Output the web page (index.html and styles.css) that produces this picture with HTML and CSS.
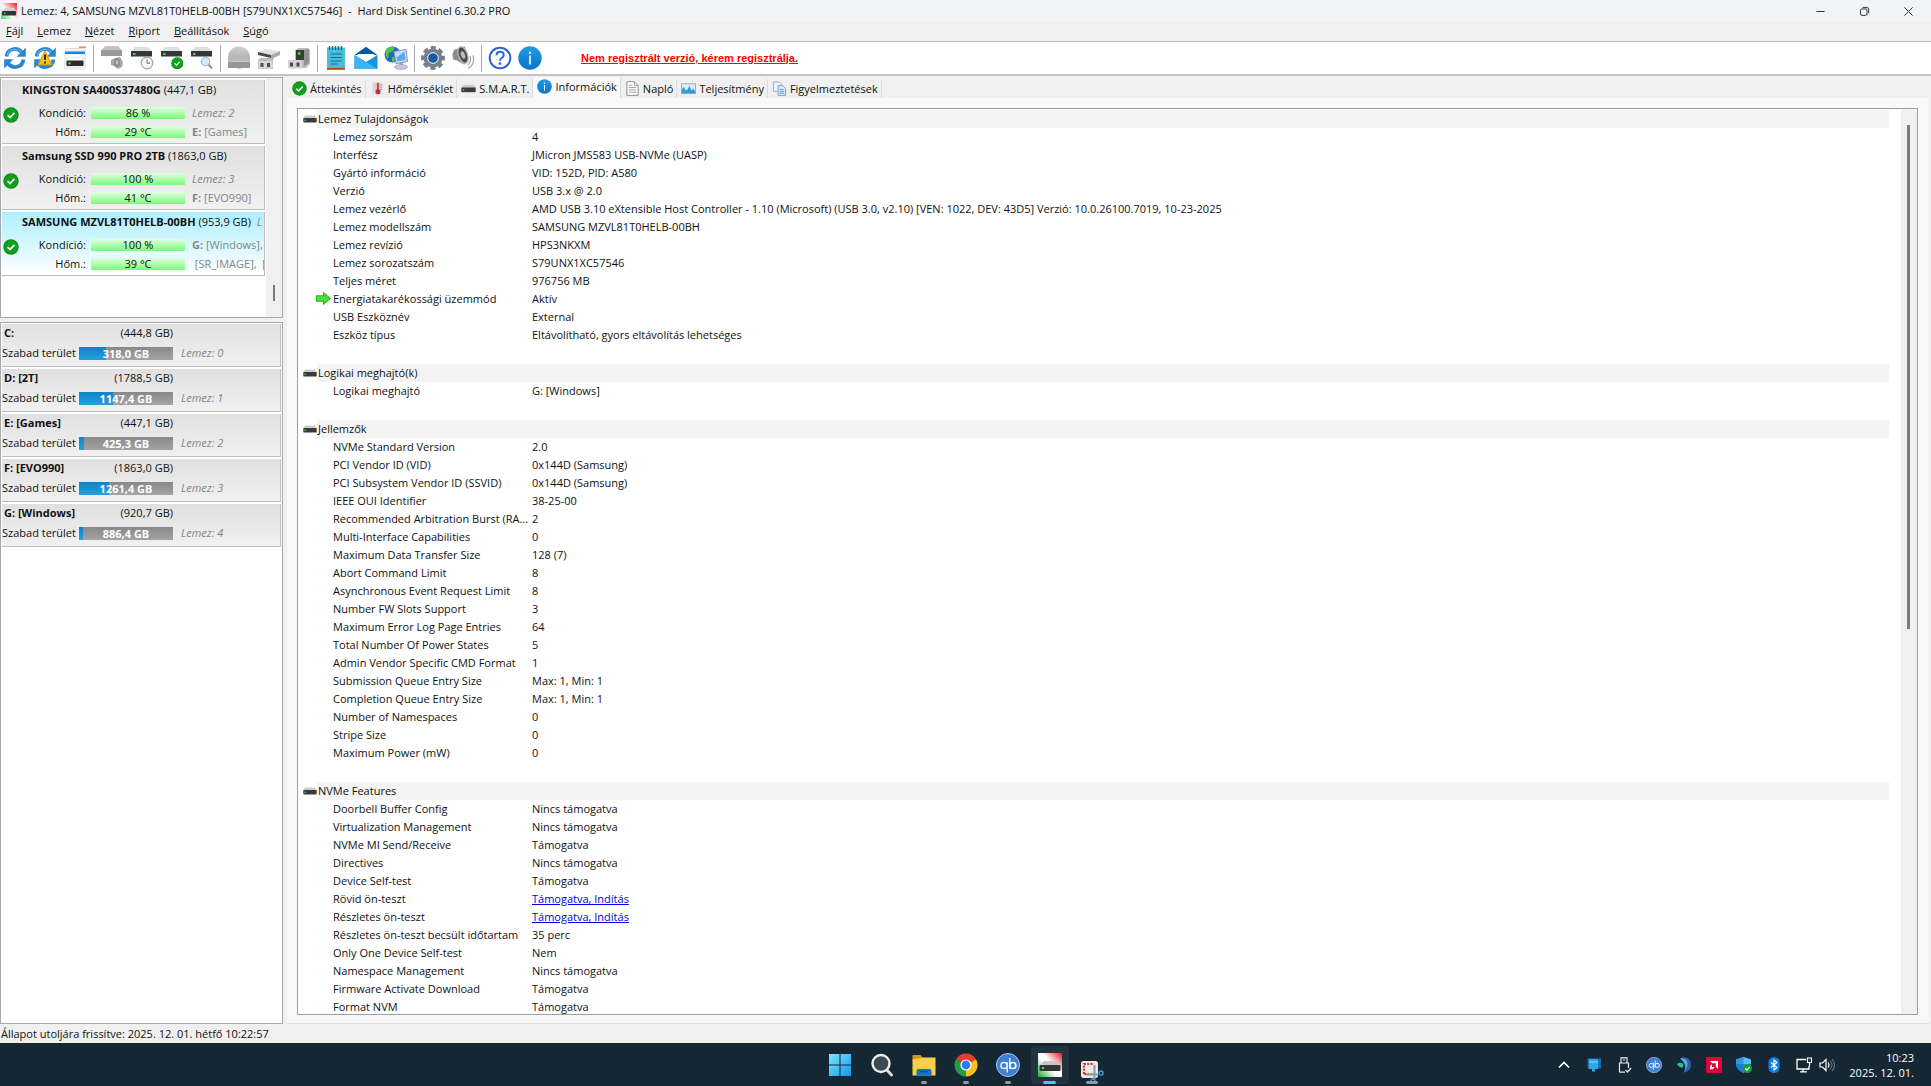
FILE: index.html
```
<!DOCTYPE html>
<html lang="hu">
<head>
    <meta charset="UTF-8">
    <meta name="viewport" content="width=device-width, initial-scale=1.0">
    <title>Hard Disk Sentinel 6.30.2 PRO</title>
    <link rel="stylesheet" href="styles.css">
</head>
<body>
    <!-- shared icons -->
    <svg class="defs" width="0" height="0" aria-hidden="true">
        <defs>
            <linearGradient id="g-blue" x1="0" y1="0" x2="0" y2="1"><stop offset="0" stop-color="#1f9be6"/><stop offset="1" stop-color="#0a74cc"/></linearGradient>
            <linearGradient id="g-grey" x1="0" y1="0" x2="0" y2="1"><stop offset="0" stop-color="#cfcfcf"/><stop offset="1" stop-color="#9c9c9c"/></linearGradient>
            <linearGradient id="g-win" x1="0" y1="0" x2="1" y2="1"><stop offset="0" stop-color="#7be8fb"/><stop offset="1" stop-color="#1694ee"/></linearGradient>
            <linearGradient id="g-red" x1="0" y1="1" x2="1" y2="0"><stop offset="0" stop-color="#0fae2c"/><stop offset=".42" stop-color="#fff"/><stop offset=".58" stop-color="#fff"/><stop offset="1" stop-color="#f01414"/></linearGradient>
            <linearGradient id="g-logo" x1="0" y1="1" x2="1" y2="0"><stop offset="0" stop-color="#3cdf64"/><stop offset=".45" stop-color="#fff"/><stop offset="1" stop-color="#f01e1e"/></linearGradient>
        </defs>
        <symbol id="i-ok" viewBox="0 0 16 16">
            <circle cx="8" cy="8" r="7.7" fill="#0b8a14"/><circle cx="8" cy="8" r="6.8" fill="#12a01c"/>
            <path d="M4.6 8.2 7 10.5l4.4-4.6" fill="none" stroke="#fff" stroke-width="1.6"/>
        </symbol>
        <symbol id="i-disk" viewBox="0 0 14 8">
            <path d="M2 .5h10l1.700 3H.3z" fill="#c9cdd0"/><rect x=".3" y="3" width="13.400" height="4.400" rx=".6" fill="#3b3b3b"/><rect x="1.600" y="4.600" width="1.400" height="1.400" fill="#39d353"/>
        </symbol>
        <symbol id="i-drive" viewBox="0 0 24 24">
            <path d="M5 1h13l4 4.500H1z" fill="#dcdfe0"/><rect x="1" y="5" width="21" height="5.500" fill="#363636"/><rect x="3" y="7" width="2.500" height="2" fill="#46dd46"/>
        </symbol>
        <symbol id="i-info" viewBox="0 0 24 24">
            <circle cx="12" cy="12" r="11.700" fill="url(#g-blue)"/><circle cx="12" cy="6.700" r="1.200" fill="#fff"/><path d="M12 9.500v9" stroke="#fff" stroke-width="1.600"/>
        </symbol>
        <symbol id="i-refresh" viewBox="0 0 24 24">
            <path d="M3.500 10.500C4.500 2.500 14 .5 19 6.500M20.500 13.500C19.500 21.500 10 23.500 5 17.500" fill="none" stroke="#2b86d2" stroke-width="3.800"/>
            <path d="M22.800 1.500v9.300h-9.300zM1.200 22.500v-9.300h9.300z" fill="#2b86d2"/>
            <path d="M4 9.500C6 3 13.500 1.500 18.500 6" fill="none" stroke="#5db1ee" stroke-width="1.200"/>
        </symbol>
        <symbol id="i-qb" viewBox="0 0 24 24">
            <circle cx="12" cy="12" r="11.500" fill="#3f7fd0" stroke="#a9c8f2" stroke-width="1"/>
            <circle cx="8" cy="12.500" r="3.100" fill="none" stroke="#dcebff" stroke-width="1.500"/><path d="M11.200 9v10.500M13.800 5v11" stroke="#dcebff" stroke-width="1.500"/><circle cx="16.800" cy="12.500" r="3.100" fill="none" stroke="#fff" stroke-width="1.500"/>
        </symbol>
        <symbol id="i-logo" viewBox="0 0 24 24">
            <rect width="24" height="24" fill="url(#g-red)"/><path d="M6 8h12l4.500 4.500h-21z" fill="#c6c9ca"/><rect x="1.500" y="12" width="21" height="6" rx="1" fill="#353535"/><rect x="4" y="14" width="2" height="2" fill="#40df40"/>
        </symbol>
    </svg>

    <div class="window">
        <header class="titlebar">
            <svg class="title-icon" viewBox="0 0 16 16"><rect width="16" height="16" fill="url(#g-logo)"/><path d="M4 5h9l2 3.500H1.500z" fill="#d0d3d4"/><rect x="1" y="8" width="14" height="4.500" rx="1" fill="#333"/><rect x="3" y="9.500" width="1.500" height="1.500" fill="#40df40"/></svg>
            <h1>Lemez: 4, SAMSUNG MZVL81T0HELB-00BH [S79UNX1XC57546] &nbsp;-&nbsp; Hard Disk Sentinel 6.30.2 PRO</h1>
            <div class="window-buttons">
                <button type="button" aria-label="Kis méret"><svg viewBox="0 0 12 12"><path d="M1.500 6h9"/></svg></button>
                <button type="button" aria-label="Előző méret"><svg viewBox="0 0 12 12"><rect x="1.700" y="3.200" width="7" height="7" rx="1.500"/><path d="M4 1.500h4.500a2 2 0 0 1 2 2V8"/></svg></button>
                <button type="button" aria-label="Bezárás"><svg viewBox="0 0 12 12"><path d="M1.500 1.500l9 9M10.500 1.500l-9 9"/></svg></button>
            </div>
        </header>

        <nav class="menubar">
            <button type="button"><u>F</u>ájl</button>
            <button type="button"><u>L</u>emez</button>
            <button type="button"><u>N</u>ézet</button>
            <button type="button"><u>R</u>iport</button>
            <button type="button"><u>B</u>eállítások</button>
            <button type="button"><u>S</u>úgó</button>
        </nav>

        <div class="toolbar">
            <button type="button" aria-label="Frissítés"><svg viewBox="0 0 24 24"><use href="#i-refresh"/></svg></button>
            <button type="button" aria-label="Frissítés figyelmeztetéssel"><svg viewBox="0 0 24 24"><use href="#i-refresh"/><path d="M12 5.500 18.500 18.500h-13z" fill="#ffc61a" stroke="#eba400" stroke-width="1.500" stroke-linejoin="round"/><path d="M12 8.500v5.500M12 15.500v2" stroke="#222" stroke-width="1.800"/></svg></button>
            <button type="button" aria-label="Nézet"><svg viewBox="0 0 24 24"><rect x="1" y="3.500" width="22" height="20" fill="#ececec"/><path d="M16 1.200h7" stroke="#e08080" stroke-width="1.500"/><path d="M2 2.500h20" stroke="#ddd"/><rect x="2" y="5.500" width="20" height="2.800" fill="#1c86dc"/><rect x="2" y="8.300" width="20" height="2.500" fill="#fff"/><path d="M6 12h12l2.500 3h-17z" fill="#fff"/><rect x="3.500" y="14.500" width="17" height="5.500" rx="1" fill="#2c2c2c"/><rect x="5.500" y="16.300" width="2" height="2" fill="#4be04b"/></svg></button>
            <span class="sep"></span>
            <button type="button" aria-label="Hang"><svg viewBox="0 0 24 24"><path d="M5 0h13l4 4.500H1z" fill="#c4c4c4"/><rect x="1" y="4" width="21" height="6" fill="#9a9a9a"/><path d="M11 14l4-2 5-1 3 5-1 5-4 2-4-3-3-1z" fill="#a8a8a8"/><ellipse cx="17" cy="16.500" rx="3" ry="4.500" fill="#8d8d8d"/><ellipse cx="17" cy="16.500" rx="1.300" ry="2.200" fill="#c4c4c4"/></svg></button>
            <button type="button" aria-label="Ütemezés"><svg viewBox="0 0 24 24"><use href="#i-drive"/><circle cx="17" cy="17" r="5.800" fill="#f7f7f7" stroke="#a2a2a2" stroke-width="1.200"/><path d="M17 13.500v3.700h3" fill="none" stroke="#666"/></svg></button>
            <button type="button" aria-label="Teszt"><svg viewBox="0 0 24 24"><use href="#i-drive"/><use href="#i-ok" x="11" y="11" width="12.500" height="12.500"/></svg></button>
            <button type="button" aria-label="Keresés"><svg viewBox="0 0 24 24"><use href="#i-drive"/><path d="M18.500 18.500l3.500 4" stroke="#a88b7b" stroke-width="2"/><circle cx="15.500" cy="15.500" r="4.300" fill="#cfe9fb" stroke="#8eb2cd"/></svg></button>
            <span class="sep"></span>
            <button type="button" aria-label="Lemez művelet"><svg viewBox="0 0 24 24"><circle cx="12" cy="11.500" r="11" fill="url(#g-grey)"/><path d="M4.500 11h15l3 4.500h-21z" fill="#b9b9b9"/><rect x="1" y="15" width="22" height="7" rx="1" fill="#969696"/><path d="M2 15.500h20" stroke="#c8c8c8"/></svg></button>
            <button type="button" aria-label="Csatlakozó"><svg viewBox="0 0 24 24"><path d="M1 6l8-3 14 2-9 4z" fill="#e2e2e2"/><path d="M1 6l13 3v3L1 9z" fill="#4a4a4a"/><path d="M14 9l9-4v4l-9 4z" fill="#a9a9a9"/><path d="M1 14l3-2h13l-1 3v8H1z" fill="#bcbcbc"/><rect x="1.500" y="15" width="14" height="7.500" rx="1" fill="#d8d8d8"/><rect x="3.500" y="17" width="3" height="4" fill="#4b4b4b"/><rect x="10" y="17" width="3" height="4" fill="#4b4b4b"/></svg></button>
            <button type="button" aria-label="Eltávolítás"><svg viewBox="0 0 24 24"><path d="M8 4l4-2h9l2 2v14l-4 4H8z" fill="#bbb"/><rect x="9" y="4" width="8" height="10" fill="#3a3a3a"/><rect x="11" y="6" width="2.500" height="3" fill="#35d135"/><path d="M17 4l5-1v14l-5 3z" fill="#929292"/><rect x="1" y="14" width="14" height="8.500" rx="1" fill="#d2d2d2"/><rect x="3" y="16.500" width="3" height="4" fill="#4b4b4b"/><rect x="9.500" y="16.500" width="3" height="4" fill="#4b4b4b"/></svg></button>
            <span class="sep"></span>
            <button type="button" aria-label="Jegyzet"><svg viewBox="0 0 24 24"><rect x="3" y="1.500" width="18" height="20" fill="#45bedb"/><path d="M6.500 8h11.500M6.500 11.500h11.500M6.500 15h11.500M6.500 18h7" stroke="#14708f" stroke-width="1.200"/><path d="M5.500 0v4M8.500 0v4M11.500 0v4M14.500 0v4M17.500 0v4" stroke="#176a8a" stroke-width="1.300"/><rect x="3" y="21.500" width="18" height="2.300" fill="#b04a18"/></svg></button>
            <button type="button" aria-label="Levél"><svg viewBox="0 0 24 24"><path d="M.5 9 12 .8 23.500 9z" fill="#0a58a4"/><path d="M3.500 8h17L12 17z" fill="#fff"/><path d="M.5 9 12 16 23.500 9v14H.5z" fill="#1c93e0"/><path d="M.5 9 12 16 23.500 23H.5z" fill="#3bb6f0"/></svg></button>
            <button type="button" aria-label="Hálózat"><svg viewBox="0 0 24 24"><circle cx="8.500" cy="8.500" r="8" fill="#2464c4"/><path d="M2 4q5-5 9-3l-2 4-4 2-1 6q-4-4-2-9zM8 11l4 1-2 4q-3 0-2-5z" fill="#4fc743"/><path d="M10 5.500 22 3.500l1.500 12L12 17.500z" fill="#e1e3f3" stroke="#8289b5"/><path d="M11.800 7l8.700-1.500 1.200 8.500-8.700 1.500z" fill="#59a9f3"/><path d="M11.800 7l8.700-1.500-8 6z" fill="#bfe0ff"/><path d="M15 17l3.500-.5 1 3.500H16z" fill="#9ba2c5"/><ellipse cx="17" cy="21" rx="6.500" ry="2.400" fill="#c3c7e0" stroke="#9298bd" stroke-width=".6"/></svg></button>
            <span class="sep"></span>
            <button type="button" aria-label="Beállítások"><svg viewBox="0 0 24 24"><circle cx="12" cy="12" r="7.500" fill="none" stroke="#75808a" stroke-width="4"/><circle cx="12" cy="12" r="10.200" fill="none" stroke="#75808a" stroke-width="3.400" stroke-dasharray="5 3.010" stroke-dashoffset="2.500"/><circle cx="12" cy="12" r="5.300" fill="#1a5ca3" stroke="#e3ebf2"/></svg></button>
            <button type="button" aria-label="Hangok"><svg viewBox="0 0 24 24"><path d="M1.500 8 3 4l8-3 3-.5 3 15-4 3-7-4-4-1z" fill="#8c8c8c"/><ellipse cx="12" cy="9" rx="4.500" ry="8.500" transform="rotate(-20 12 9)" fill="#4b4b4b" stroke="#b9b9b9" stroke-width="1.200"/><ellipse cx="12" cy="9" rx="2" ry="4" transform="rotate(-20 12 9)" fill="#bdbdbd"/><path d="M17 19q4-4 2-9M17.500 22.500q7-5 4.500-13" fill="none" stroke="#aaa4c0" stroke-width="1.300"/></svg></button>
            <span class="sep"></span>
            <button type="button" aria-label="Segítség"><svg viewBox="0 0 24 24"><circle cx="12" cy="12" r="10.300" fill="#fff" stroke="#2a67d0" stroke-width="2"/><path d="M8.500 9.300q0-3.500 3.600-3.500T15.700 9q0 1.800-2 3-1.700 1-1.700 2.700" fill="none" stroke="#2a67d0" stroke-width="2"/><circle cx="12" cy="17.600" r="1.400" fill="#2a67d0"/></svg></button>
            <button type="button" aria-label="Névjegy"><svg viewBox="0 0 24 24"><use href="#i-info"/></svg></button>
            <a class="register" href="#">Nem regisztrált verzió, kérem regisztrálja.</a>
        </div>

        <div class="workspace">
            <aside class="sidebar">
                <section class="disk-box">
                    <div class="disk-list">
                        <article class="disk">
                            <svg class="ok" viewBox="0 0 16 16"><use href="#i-ok"/></svg>
                            <h2><b>KINGSTON SA400S37480G</b> (447,1 GB)</h2>
                            <span class="key">Kondíció:</span><span class="good">86 %</span><span class="note"><i>Lemez: 2</i></span>
                            <span class="key">Hőm.:</span><span class="good">29 °C</span><span class="note"><b>E:</b> [Games]</span>
                        </article>
                        <article class="disk">
                            <svg class="ok" viewBox="0 0 16 16"><use href="#i-ok"/></svg>
                            <h2><b>Samsung SSD 990 PRO 2TB</b> (1863,0 GB)</h2>
                            <span class="key">Kondíció:</span><span class="good">100 %</span><span class="note"><i>Lemez: 3</i></span>
                            <span class="key">Hőm.:</span><span class="good">41 °C</span><span class="note"><b>F:</b> [EVO990]</span>
                        </article>
                        <article class="disk selected">
                            <svg class="ok" viewBox="0 0 16 16"><use href="#i-ok"/></svg>
                            <h2><b>SAMSUNG MZVL81T0HELB-00BH</b> (953,9 GB) &nbsp;<i>L</i></h2>
                            <span class="key">Kondíció:</span><span class="good">100 %</span><span class="note"><b>G:</b> [Windows],</span>
                            <span class="key">Hőm.:</span><span class="good">39 °C</span><span class="note">&nbsp;[SR_IMAGE], &nbsp;[</span>
                        </article>
                    </div>
                    <div class="scroll"><span class="thumb-small"></span></div>
                </section>

                <section class="volume-box">
                    <article class="volume">
                        <div class="volume-head"><b>C:</b><span>(444,8 GB)</span></div>
                        <div class="volume-row"><span>Szabad terület</span><span class="usage"><span class="fill" style="width: 29%"></span><b>318,0 GB</b></span><i>Lemez: 0</i></div>
                    </article>
                    <article class="volume">
                        <div class="volume-head"><b>D: [2T]</b><span>(1788,5 GB)</span></div>
                        <div class="volume-row"><span>Szabad terület</span><span class="usage"><span class="fill" style="width: 36%"></span><b>1147,4 GB</b></span><i>Lemez: 1</i></div>
                    </article>
                    <article class="volume">
                        <div class="volume-head"><b>E: [Games]</b><span>(447,1 GB)</span></div>
                        <div class="volume-row"><span>Szabad terület</span><span class="usage"><span class="fill" style="width: 5%"></span><b>425,3 GB</b></span><i>Lemez: 2</i></div>
                    </article>
                    <article class="volume">
                        <div class="volume-head"><b>F: [EVO990]</b><span>(1863,0 GB)</span></div>
                        <div class="volume-row"><span>Szabad terület</span><span class="usage"><span class="fill" style="width: 32%"></span><b>1261,4 GB</b></span><i>Lemez: 3</i></div>
                    </article>
                    <article class="volume">
                        <div class="volume-head"><b>G: [Windows]</b><span>(920,7 GB)</span></div>
                        <div class="volume-row"><span>Szabad terület</span><span class="usage"><span class="fill" style="width: 4%"></span><b>886,4 GB</b></span><i>Lemez: 4</i></div>
                    </article>
                </section>
            </aside>

            <main class="content">
                <div class="tabs" role="tablist">
                    <button type="button" role="tab" class="tab"><svg viewBox="0 0 16 16"><use href="#i-ok"/></svg>Áttekintés</button>
                    <button type="button" role="tab" class="tab"><svg viewBox="0 0 16 16"><path d="M2 1h9l3 2v12H2z" fill="#e1e6ec"/><path d="M4 3v9M6 2v9" stroke="#c3cbd4"/><path d="M8.500 2v8" stroke="#d9453c" stroke-width="2.600"/><circle cx="8.500" cy="11.500" r="2.700" fill="#c92a22"/><path d="M11 4h2M11 6.500h2M11 9h2" stroke="#7c8fa5"/></svg>Hőmérséklet</button>
                    <button type="button" role="tab" class="tab"><svg viewBox="0 0 14 8"><use href="#i-disk"/></svg>S.M.A.R.T.</button>
                    <button type="button" role="tab" class="tab active" aria-selected="true"><svg viewBox="0 0 24 24"><use href="#i-info"/></svg>Információk</button>
                    <button type="button" role="tab" class="tab"><svg viewBox="0 0 16 16"><path d="M2 .7h8l4 4v10.600H2z" fill="#fff" stroke="#888"/><path d="M10 .7v4h4M4 4.500h4M4 7h8M4 9.500h8M4 12h8" fill="none" stroke="#999"/></svg>Napló</button>
                    <button type="button" role="tab" class="tab"><svg viewBox="0 0 16 16"><rect x=".5" y="3" width="15" height="10.500" fill="#d9efff" stroke="#9ab"/><path d="M1 13V9l2-3 2 4 2-1 2-4 2 5 2-2 2 3v2z" fill="#3a96dc"/></svg>Teljesítmény</button>
                    <button type="button" role="tab" class="tab"><svg viewBox="0 0 16 16"><path d="M1.500 1h6l2.500 2.500V11H1.500z" fill="#e8f3fd" stroke="#9aaec0"/><path d="M6.500 5h5l3 3v7.300h-8z" fill="#d9ecfb" stroke="#7d9ab8"/><path d="M8 9h4M8 11h5M8 13h5" stroke="#5b9bd5"/></svg>Figyelmeztetések</button>
                </div>
                <div class="panel">
                    <div class="list">
                        <table class="props">
                            <tbody>
                                <tr class="group"><th colspan="2"><svg viewBox="0 0 14 8"><use href="#i-disk"/></svg><span>Lemez Tulajdonságok</span></th></tr>
                                <tr><th>Lemez sorszám</th><td>4</td></tr>
                                <tr><th>Interfész</th><td>JMicron JMS583 USB-NVMe (UASP)</td></tr>
                                <tr><th>Gyártó információ</th><td>VID: 152D, PID: A580</td></tr>
                                <tr><th>Verzió</th><td>USB 3.x @ 2.0</td></tr>
                                <tr><th>Lemez vezérlő</th><td>AMD USB 3.10 eXtensible Host Controller - 1.10 (Microsoft) (USB 3.0, v2.10) [VEN: 1022, DEV: 43D5] Verzió: 10.0.26100.7019, 10-23-2025</td></tr>
                                <tr><th>Lemez modellszám</th><td>SAMSUNG MZVL81T0HELB-00BH</td></tr>
                                <tr><th>Lemez revízió</th><td>HPS3NKXM</td></tr>
                                <tr><th>Lemez sorozatszám</th><td>S79UNX1XC57546</td></tr>
                                <tr><th>Teljes méret</th><td>976756 MB</td></tr>
                                <tr class="marked"><th><svg viewBox="0 0 14 12"><path d="M.5 3.500h6.500V.7L13.500 6 7 11.300V8.500H.5z" fill="#4ddc3c" stroke="#30b528"/></svg>Energiatakarékossági üzemmód</th><td>Aktív</td></tr>
                                <tr><th>USB Eszköznév</th><td>External</td></tr>
                                <tr><th>Eszköz típus</th><td>Eltávolítható, gyors eltávolítás lehetséges</td></tr>
                            </tbody>
                            <tbody>
                                <tr class="group"><th colspan="2"><svg viewBox="0 0 14 8"><use href="#i-disk"/></svg><span>Logikai meghajtó(k)</span></th></tr>
                                <tr><th>Logikai meghajtó</th><td>G: [Windows]</td></tr>
                            </tbody>
                            <tbody>
                                <tr class="group"><th colspan="2"><svg viewBox="0 0 14 8"><use href="#i-disk"/></svg><span>Jellemzők</span></th></tr>
                                <tr><th>NVMe Standard Version</th><td>2.0</td></tr>
                                <tr><th>PCI Vendor ID (VID)</th><td>0x144D (Samsung)</td></tr>
                                <tr><th>PCI Subsystem Vendor ID (SSVID)</th><td>0x144D (Samsung)</td></tr>
                                <tr><th>IEEE OUI Identifier</th><td>38-25-00</td></tr>
                                <tr><th>Recommended Arbitration Burst (RA...</th><td>2</td></tr>
                                <tr><th>Multi-Interface Capabilities</th><td>0</td></tr>
                                <tr><th>Maximum Data Transfer Size</th><td>128 (7)</td></tr>
                                <tr><th>Abort Command Limit</th><td>8</td></tr>
                                <tr><th>Asynchronous Event Request Limit</th><td>8</td></tr>
                                <tr><th>Number FW Slots Support</th><td>3</td></tr>
                                <tr><th>Maximum Error Log Page Entries</th><td>64</td></tr>
                                <tr><th>Total Number Of Power States</th><td>5</td></tr>
                                <tr><th>Admin Vendor Specific CMD Format</th><td>1</td></tr>
                                <tr><th>Submission Queue Entry Size</th><td>Max: 1, Min: 1</td></tr>
                                <tr><th>Completion Queue Entry Size</th><td>Max: 1, Min: 1</td></tr>
                                <tr><th>Number of Namespaces</th><td>0</td></tr>
                                <tr><th>Stripe Size</th><td>0</td></tr>
                                <tr><th>Maximum Power (mW)</th><td>0</td></tr>
                            </tbody>
                            <tbody>
                                <tr class="group"><th colspan="2"><svg viewBox="0 0 14 8"><use href="#i-disk"/></svg><span>NVMe Features</span></th></tr>
                                <tr><th>Doorbell Buffer Config</th><td>Nincs támogatva</td></tr>
                                <tr><th>Virtualization Management</th><td>Nincs támogatva</td></tr>
                                <tr><th>NVMe MI Send/Receive</th><td>Támogatva</td></tr>
                                <tr><th>Directives</th><td>Nincs támogatva</td></tr>
                                <tr><th>Device Self-test</th><td>Támogatva</td></tr>
                                <tr><th>Rövid ön-teszt</th><td><a href="#">Támogatva, Indítás</a></td></tr>
                                <tr><th>Részletes ön-teszt</th><td><a href="#">Támogatva, Indítás</a></td></tr>
                                <tr><th>Részletes ön-teszt becsült időtartam</th><td>35 perc</td></tr>
                                <tr><th>Only One Device Self-test</th><td>Nem</td></tr>
                                <tr><th>Namespace Management</th><td>Nincs támogatva</td></tr>
                                <tr><th>Firmware Activate Download</th><td>Támogatva</td></tr>
                                <tr><th>Format NVM</th><td>Támogatva</td></tr>
                            </tbody>
                        </table>
                        <div class="scroll"><span class="thumb"></span></div>
                    </div>
                </div>
            </main>
        </div>

        <footer class="statusbar">Állapot utoljára frissítve: 2025. 12. 01. hétfő 10:22:57</footer>
    </div>

    <div class="taskbar">
        <div class="apps">
            <button type="button" class="app" aria-label="Start"><svg viewBox="0 0 24 24"><path d="M1 1h10.500v10.500H1zM12.500 1H23v10.500H12.500zM1 12.500h10.500V23H1zM12.500 12.500H23V23H12.500z" fill="url(#g-win)"/></svg></button>
            <button type="button" class="app" aria-label="Keresés"><svg viewBox="0 0 24 24"><path d="M17 17l4.500 5" stroke="#d8dde0" stroke-width="3" stroke-linecap="round"/><circle cx="11" cy="10.500" r="8.500" fill="#3b4a55" stroke="#eceff0" stroke-width="2.400"/></svg></button>
            <button type="button" class="app open" aria-label="Fájlkezelő"><svg viewBox="0 0 24 24"><path d="M.5 2h8l2.500 3v3H.5z" fill="#d89416"/><path d="M.5 6.500 11 4.500h12.500v18H.5z" fill="#fbcf4b"/><path d="M4.500 22.500V18a2 2 0 0 1 2-2h11a2 2 0 0 1 2 2v4.500z" fill="#1573c9"/><path d="M8 18.500h8" stroke="#0b4e92" stroke-width="1.500"/></svg></button>
            <button type="button" class="app open" aria-label="Chrome"><svg viewBox="0 0 24 24"><path d="M12 12 2.040 6.250A11.500 11.500 0 0 1 21.960 6.250z" fill="#e33b2e"/><path d="M12 12 21.960 6.250A11.500 11.500 0 0 1 12 23.500z" fill="#fbc116"/><path d="M12 12v11.500A11.500 11.500 0 0 1 2.040 6.250z" fill="#249a46"/><path d="M12 6.500h10L12 12z" fill="#e33b2e"/><path d="M16.800 14.500 12 23.500v-6z" fill="#fbc116"/><circle cx="12" cy="12" r="5.600" fill="#fff"/><circle cx="12" cy="12" r="4.400" fill="#2e7cf0"/></svg></button>
            <button type="button" class="app open" aria-label="qBittorrent"><svg viewBox="0 0 24 24"><use href="#i-qb"/></svg></button>
            <button type="button" class="app open current" aria-label="Hard Disk Sentinel"><svg viewBox="0 0 24 24"><use href="#i-logo"/></svg></button>
            <button type="button" class="app open snip" aria-label="Képmetsző"><svg viewBox="0 0 24 24"><rect x="1" y="1" width="17" height="17" rx="2.500" fill="#ece8e6"/><path d="M4 14V4h10" fill="none" stroke="#cf3928" stroke-width="2.200" stroke-dasharray="2 1.300"/><path d="M4 14h8" stroke="#cf3928" stroke-width="2.200" stroke-dasharray="2 1.300"/><path d="M14.500 5v14M6 14.500h12" stroke="#8f9aa2" stroke-width="2"/><circle cx="21" cy="13" r="2" fill="none" stroke="#27a0e6" stroke-width="1.500"/><circle cx="13" cy="21" r="2" fill="none" stroke="#27a0e6" stroke-width="1.500"/></svg></button>
        </div>
        <div class="tray">
            <svg viewBox="0 0 16 16"><path d="M3 10.500l5-5 5 5" fill="none" stroke="#fff" stroke-width="1.600"/></svg>
            <svg viewBox="0 0 16 16"><rect x="1.500" y="1.500" width="13.500" height="10" fill="#1272bb"/><path d="M3 2h9v10H9v2.500H6V12H3z" fill="#2ea6e8"/><path d="M3 5h9" stroke="#5fc4f6" stroke-width="2"/></svg>
            <svg viewBox="0 0 16 16"><path d="M5 6V.8h6V6M3.500 15.200V6h9v5M3.500 15.200H9" fill="none" stroke="#e8ecee" stroke-width="1.200"/><path d="M7 3h2M9.500 13l2 2 3.500-4" fill="none" stroke="#e8ecee" stroke-width="1.200"/></svg>
            <svg viewBox="0 0 24 24"><use href="#i-qb"/></svg>
            <svg viewBox="0 0 16 16"><path d="M4 1.500A7 7 0 0 1 15 7.500 7.500 7.500 0 0 1 7.500 15.500q3-3 2.500-6T4 1.500z" fill="#2c5fae"/><path d="M4 1.500q6-1 7.500 4.500.5 5-4 9.500 2.500-4 1.500-7Q8 4 4 1.500z" fill="#5aa9e0"/><path d="M1 7q2-2 5-1 2 1 1 4-1 1-2 .5Q2 10 1 7z" fill="#2bc19a"/></svg>
            <svg viewBox="0 0 16 16"><rect width="16" height="16" fill="#e0003c"/><path d="M4 4h8v8l-2.200-2.200V6.200H6.200z" fill="#fff"/><path d="M6 7v3h3l-2.200 2.200H4V9z" fill="#fff"/></svg>
            <svg viewBox="0 0 16 16"><path d="M7.500 0 15 2.500V7q0 6-7.500 9Q0 13 0 7V2.500z" fill="#1f93e0"/><path d="M7.500 0 15 2.500V7H0V2.500z" fill="#56bdf5"/><path d="M7.500 0v16Q0 13 0 7V2.500z" fill="#0f6fc0" opacity=".5"/><circle cx="11.500" cy="11.500" r="4.500" fill="#16a034"/><path d="M9.300 11.500l1.600 1.600 2.800-3" fill="none" stroke="#fff" stroke-width="1.200"/></svg>
            <svg viewBox="0 0 16 16"><rect x="2.500" width="11" height="16" rx="5.500" fill="#0f7fe8"/><path d="M5 5.500l6 5L8 13V3l3 2.500-6 5" fill="none" stroke="#fff" stroke-width="1.100"/></svg>
            <div class="tray-pair">
                <svg viewBox="0 0 16 16"><path d="M10 2.500H1v9.500h12V9M4 14.800h7M7 12v2.500" fill="none" stroke="#fff" stroke-width="1.300"/><path d="M11.500 1h4v4.500h-4zM13.500 5.500V9" fill="none" stroke="#fff" stroke-width="1.200"/></svg>
                <svg viewBox="0 0 16 16"><path d="M1 6h2.500L7 2.500v11L3.500 10H1z" fill="none" stroke="#fff" stroke-width="1.200"/><path d="M9 5.500q2 2.500 0 5" fill="none" stroke="#fff" stroke-width="1.200"/><path d="M11 3.500q4 4.500 0 9M13 2q5 6 0 12" fill="none" stroke="#66747d" stroke-width="1.100"/></svg>
            </div>
            <div class="clock"><span>10:23</span><span>2025. 12. 01.</span></div>
        </div>
    </div>
</body>
</html>
```
FILE: styles.css
```
* {
    box-sizing: border-box;
}
body {
    margin: 0;
    height: 100vh;
    display: flex;
    flex-direction: column;
    overflow: hidden;
    background-color: #f0f0f0;
    color: #111;
    font-family: "Open Sans", "Noto Sans", sans-serif;
    font-size: 11px;
    line-height: 18px;
    white-space: nowrap;
}
button {
    border: none;
    padding: 0;
    background: none;
    color: inherit;
    font: inherit;
}
svg {
    display: block;
    flex: none;
}
.defs {
    position: absolute;
}
.window {
    flex: 1;
    min-height: 0;
    display: flex;
    flex-direction: column;
}

/* title bar and menu */
.titlebar {
    display: flex;
    align-items: center;
    height: 22px;
    background-color: #f1f3f6;
}
.title-icon {
    width: 16px;
    height: 16px;
    margin: 0 4px 0 1px;
}
.titlebar h1 {
    flex: 1;
    margin: 0;
    font-size: 11px;
    font-weight: normal;
}
.window-buttons {
    display: flex;
    padding-right: 1px;
}
.window-buttons button {
    width: 44px;
    height: 22px;
    display: flex;
    align-items: center;
    justify-content: center;
}
.window-buttons svg {
    width: 11px;
    height: 11px;
    fill: none;
    stroke: #222;
}
.menubar {
    display: flex;
    align-items: flex-start;
    gap: 14px;
    height: 19px;
    padding-left: 6px;
}

/* toolbar */
.toolbar {
    display: flex;
    align-items: center;
    gap: 6px;
    height: 35px;
    padding-left: 3px;
    background-color: #fff;
    border-top: 1px solid #bdbdbd;
    border-bottom: 2px solid #c4c4c4;
}
.toolbar svg {
    width: 24px;
    height: 24px;
}
.sep {
    width: 1px;
    height: 27px;
    background-color: #a8a8a8;
}
.register {
    margin-left: 33px;
    color: #f00;
    font-family: "Liberation Sans", Arial, sans-serif;
    font-weight: bold;
}

.workspace {
    flex: 1;
    min-height: 0;
    display: flex;
    gap: 4px;
}

/* left side */
.sidebar {
    width: 283px;
    display: flex;
    flex-direction: column;
    gap: 4px;
    padding-top: 1px;
}
.disk-box,
.volume-box {
    background-color: #fff;
    border: 1px solid #a5a8ad;
}
.disk-box {
    display: flex;
    height: 241px;
}
.disk-list {
    flex: 1;
    min-width: 0;
    padding: 2px 1px;
}
.scroll {
    width: 16px;
    background-color: #f0f0f0;
}
.disk,
.volume {
    background: linear-gradient(#e0e0e0, #f1f1f1);
    border-right: 1px solid #bcbcbc;
    border-bottom: 1px solid #bcbcbc;
    overflow: hidden;
}
.disk {
    position: relative;
    display: grid;
    grid-template-columns: 84px 94px 1fr;
    grid-template-rows: 24px 19px 19px;
    column-gap: 5px;
    height: 64px;
    margin-bottom: 2px;
}
.disk.selected {
    background: linear-gradient(#aeeffe, #fff);
}
.disk h2 {
    grid-column: 1 / -1;
    margin: 0;
    padding: 1px 0 0 20px;
    font-size: 11px;
    font-weight: normal;
}
.ok {
    position: absolute;
    left: 1px;
    top: 27px;
    width: 16px;
    height: 16px;
}
.key {
    text-align: right;
}
.good {
    height: 12px;
    margin-top: 3px;
    line-height: 12px;
    text-align: center;
    background: linear-gradient(#e2ffe2, #7bfb7b);
}
.note,
.disk h2 i {
    color: #858585;
}
.note {
    padding-left: 2px;
}
.thumb-small {
    display: block;
    width: 2px;
    height: 16px;
    margin: 207px 0 0 7px;
    background-color: #7b7b7b;
}
.volume-box {
    flex: 1;
    padding: 1px;
}
.volume {
    height: 43px;
    margin-bottom: 2px;
}
.volume-head {
    display: flex;
    justify-content: space-between;
    width: 171px;
    padding-left: 2px;
}
.volume-row {
    display: grid;
    grid-template-columns: 77px 94px 1fr;
    align-items: center;
    margin-top: 2px;
}
.volume-row i {
    padding-left: 8px;
    color: #858585;
}
.usage {
    display: grid;
    height: 13px;
    line-height: 13px;
    background: linear-gradient(#888, #a4a4a4);
    color: #fff;
    text-align: center;
}
.usage > * {
    grid-area: 1 / 1;
}
.fill {
    background: linear-gradient(#0b84c8, #2a9fdc);
}

/* right side */
.content {
    flex: 1;
    min-width: 0;
    display: flex;
    flex-direction: column;
    padding-right: 2px;
}
.tabs {
    display: flex;
    align-items: flex-end;
    height: 22px;
    padding-left: 1px;
}
.tab {
    display: flex;
    align-items: center;
    gap: 3px;
    height: 19px;
    padding: 0 3px 0 4px;
    border-right: 1px solid #dcdcdc;
}
.tab svg {
    width: 15px;
    height: 15px;
}
.tab.active {
    height: 21px;
    padding-bottom: 2px;
    background-color: #f9f9f9;
}
.panel {
    flex: 1;
    min-height: 0;
    display: flex;
    padding: 10px 11px 8px 10px;
    background-color: #f9f9f9;
    border-bottom: 1px solid #dcdcdc;
}
.list {
    flex: 1;
    min-width: 0;
    display: flex;
    justify-content: space-between;
    overflow: hidden;
    background-color: #fff;
    border: 1px solid #9a9ea5;
}
.props {
    flex: 1;
    margin: 1px 12px 0 5px;
    border-collapse: collapse;
    table-layout: fixed;
    align-self: flex-start;
}
.props th,
.props td {
    height: 18px;
    padding: 0;
    text-align: left;
    font-weight: normal;
}
.props th {
    width: 229px;
    padding-left: 30px;
}
.props .group th {
    width: auto;
    padding-left: 15px;
    background: linear-gradient(to right, #fff 14px, #f4f4f4 14px);
}
.props .group svg {
    float: left;
    width: 14px;
    height: 8px;
    margin: 5px 0 0 -15px;
}
.props tbody + tbody::before {
    content: "";
    display: table-row;
    height: 20px;
}
.marked svg {
    float: left;
    width: 15px;
    height: 13px;
    margin: 2px 0 0 -17px;
}
.props a {
    color: #0000e8;
}
.thumb {
    display: block;
    width: 3px;
    height: 504px;
    margin: 16px 0 0 6px;
    background-color: #7b7b7b;
}
.statusbar {
    height: 19px;
    padding: 1px 0 0 1px;
    background-color: #f0f0f0;
}

/* taskbar */
.taskbar {
    display: grid;
    grid-template-columns: 1fr auto 1fr;
    height: 43px;
    background-color: #142733;
    color: #fff;
}
.apps {
    grid-column: 2;
    display: flex;
    align-items: center;
    gap: 4px;
}
.app {
    position: relative;
    width: 38px;
    height: 38px;
    display: flex;
    align-items: center;
    justify-content: center;
    border-radius: 4px;
}
.app svg {
    width: 24px;
    height: 24px;
}
.app.open::after {
    content: "";
    position: absolute;
    bottom: 0;
    width: 6px;
    height: 3px;
    border-radius: 2px;
    background-color: #8f999f;
}
.app.current {
    background-color: #22343f;
}
.app.current::after {
    width: 13px;
    background-color: #4cc2ff;
}
.app.snip {
    align-items: flex-end;
}
.app.snip::after {
    width: 12px;
}
.tray {
    display: flex;
    align-items: center;
    justify-content: flex-end;
    gap: 14px;
    padding-right: 17px;
}
.tray svg {
    width: 16px;
    height: 16px;
}
.tray-pair {
    display: flex;
    gap: 7px;
}
.clock {
    display: flex;
    flex-direction: column;
    text-align: right;
    line-height: 15px;
}
```
